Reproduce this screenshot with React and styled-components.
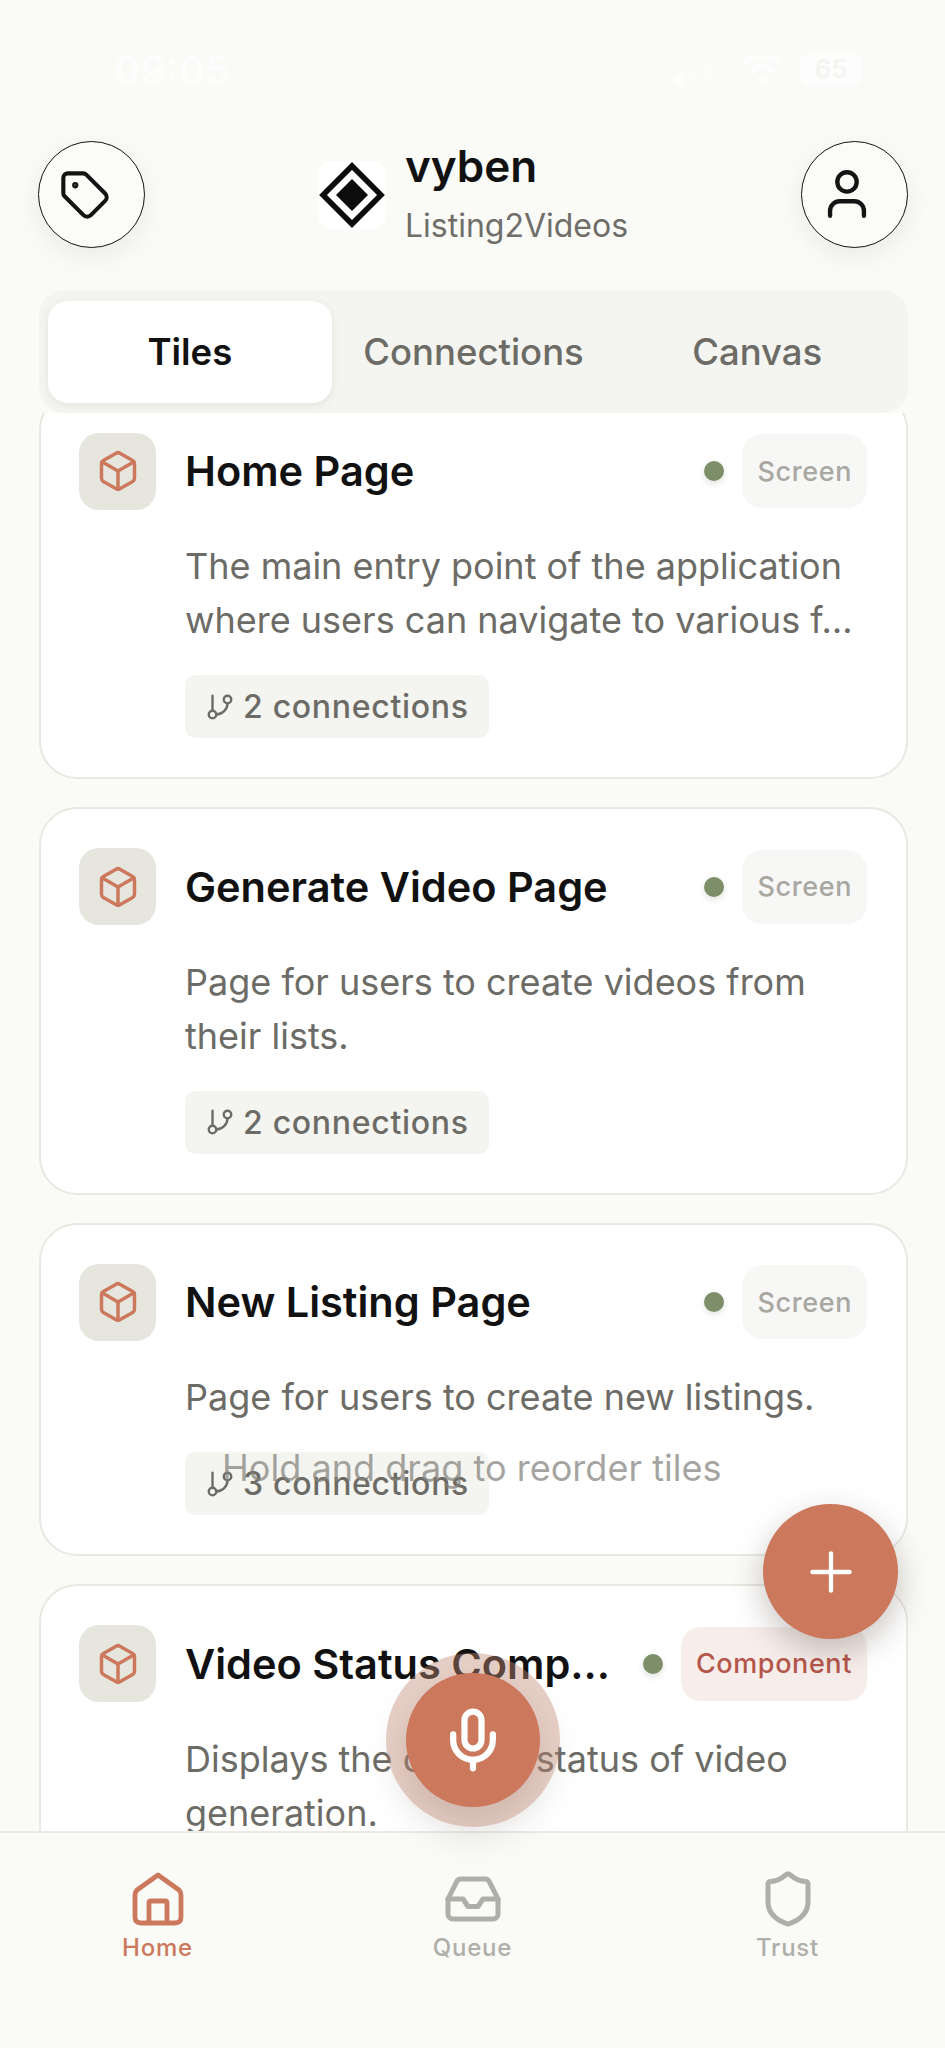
import React from 'react';
import styled, { createGlobalStyle } from 'styled-components';
import { Box, GitBranch, Inbox, Mic, Plus, Shield, Tag, User } from 'lucide-react';

const tiles = [
	{
		title: 'Home Page',
		text: 'The main entry point of the application where users can navigate to various f…',
		count: 2,
		kind: 'Screen',
	},
	{
		title: 'Generate Video Page',
		text: 'Page for users to create videos from their lists.',
		count: 2,
		kind: 'Screen',
	},
	{
		title: 'New Listing Page',
		text: 'Page for users to create new listings.',
		count: 3,
		kind: 'Screen',
	},
	{
		title: 'Video Status Comp...',
		text: 'Displays the current status of video generation.',
		kind: 'Component',
	},
];

const App = () => {
	return (
		<Page>
			<GlobalStyle />

			<StatusBar>
				<Time>09:05</Time>
				<StatusIcons>
					<Signal>
						<SignalBar $h={10} $on />
						<SignalBar $h={15} />
						<SignalBar $h={20} />
						<SignalBar $h={26} />
					</Signal>
					<svg width="41" height="30" viewBox="0 0 36 26" fill="#fff">
						<path d="M18 26l-5.500-6.500a8 8 0 0 1 11 0zM9.500 16l-3.500-4a18 18 0 0 1 24 0l-3.500 4a13 13 0 0 0-17 0zM3.500 9L0 5a27 27 0 0 1 36 0l-3.500 4a22 22 0 0 0-29 0z" />
					</svg>
					<Battery>65</Battery>
				</StatusIcons>
			</StatusBar>

			<Header>
				<RoundButton>
					<IconNudge>
						<Tag size={52} strokeWidth={1.9} />
					</IconNudge>
				</RoundButton>
				<Brand>
					<LogoBox>
						<svg width="68" height="68" viewBox="0 0 68 68">
							<path d="M34 5L63 34 34 63 5 34z" fill="none" stroke="#0c0c0c" strokeWidth="5.500" />
							<path d="M34 18L50 34 34 50 18 34z" fill="#0c0c0c" />
						</svg>
					</LogoBox>
					<BrandText>
						<BrandName>vyben</BrandName>
						<BrandSub>Listing2Videos</BrandSub>
					</BrandText>
				</Brand>
				<RoundButton>
					<IconNudge>
						<User size={58} strokeWidth={1.8} />
					</IconNudge>
				</RoundButton>
			</Header>

			<Tabs>
				<TabItem $active>Tiles</TabItem>
				<TabItem>Connections</TabItem>
				<TabItem>Canvas</TabItem>
			</Tabs>

			<ListArea>
				<TileList>
					{tiles.map((tile) => (
						<Tile key={tile.title}>
							<TileHead>
								<IconBox>
									<Box size={44} strokeWidth={1.9} />
								</IconBox>
								<TileTitle>{tile.title}</TileTitle>
								<Dot />
								<KindBadge $kind={tile.kind}>{tile.kind}</KindBadge>
							</TileHead>
							<TileText>{tile.text}</TileText>
							{tile.count && (
								<Chip>
									<GitBranch size={30} strokeWidth={1.9} />
									{tile.count} connections
								</Chip>
							)}
						</Tile>
					))}
				</TileList>
				<Hint>Hold and drag to reorder tiles</Hint>
				<AddButton>
					<Plus size={64} strokeWidth={1.6} />
				</AddButton>
				<MicButton>
					<Mic size={68} strokeWidth={2.2} />
				</MicButton>
			</ListArea>

			<BottomNav>
				<NavItem $active>
					<svg width="60" height="60" viewBox="0 0 60 60" fill="none" stroke="currentColor" strokeWidth="4.800" strokeLinejoin="round">
						<path d="M30 6L51 21Q53 23 53 26V48Q53 54 47 54H13Q7 54 7 48V26Q7 23 9 21Z" />
						<path d="M21 54V34Q21 32 23 32H37Q39 32 39 34V54" />
					</svg>
					Home
				</NavItem>
				<NavItem>
					<Inbox size={60} strokeWidth={2} />
					Queue
				</NavItem>
				<NavItem>
					<Shield size={60} strokeWidth={2} />
					Trust
				</NavItem>
			</BottomNav>
		</Page>
	);
};

const GlobalStyle = createGlobalStyle`
	* {
		box-sizing: border-box;
	}

	body {
		margin: 0;
		background: #fafaf7;
		font-family: 'Inter', 'Liberation Sans', sans-serif;
	}
`;

const Page = styled.div`
	width: 945px;
	height: 2048px;
	display: flex;
	flex-direction: column;
	background: #fafaf7;
	overflow: hidden;
`;

const StatusBar = styled.div`
	height: 141px;
	flex-shrink: 0;
	display: flex;
	justify-content: space-between;
	align-items: flex-start;
	padding: 47px 83px 0 114px;
	opacity: 0.75;
`;

const Time = styled.span`
	color: #fff;
	font-size: 40px;
	line-height: 46px;
	font-weight: 600;
`;

const StatusIcons = styled.div`
	display: flex;
	align-items: flex-end;
	gap: 17px;
	height: 38px;
`;

const Signal = styled.div`
	display: flex;
	align-items: flex-end;
	gap: 7px;
`;

const SignalBar = styled.i`
	width: 7px;
	height: ${(p) => p.$h}px;
	border-radius: 1px;
	background: ${(p) => (p.$on ? '#fff' : 'rgba(255, 255, 255, 0.35)')};
`;

const Battery = styled.span`
	width: 62px;
	height: 32px;
	border-radius: 9px;
	background: #fff;
	color: #f2f2ee;
	font-size: 26px;
	line-height: 32px;
	font-weight: 600;
	text-align: center;
`;

const Header = styled.header`
	height: 107px;
	flex-shrink: 0;
	padding: 0 37px 0 38px;
	display: flex;
	justify-content: space-between;
	align-items: center;
`;

const RoundButton = styled.button`
	width: 107px;
	height: 107px;
	padding: 0;
	display: flex;
	align-items: center;
	justify-content: center;
	border: 1.500px solid #141414;
	border-radius: 50%;
	background: #fbfbf8;
	color: #141414;
	box-shadow: 0 8px 26px rgba(40, 35, 25, 0.07);
`;

const IconNudge = styled.span`
	display: flex;
	margin-right: 14px;

	button:last-child & {
		margin-right: 16px;
		margin-top: -1px;
	}
`;

const Brand = styled.div`
	display: flex;
	align-items: center;
	gap: 19px;
`;

const LogoBox = styled.div`
	width: 68px;
	height: 68px;
	display: flex;
	align-items: center;
	justify-content: center;
	border-radius: 14px;
	background: #fff;
`;

const BrandText = styled.div`
	display: flex;
	flex-direction: column;
	gap: 16px;
	margin-top: -4px;
`;

const BrandName = styled.span`
	color: #111;
	font-size: 44px;
	line-height: 50px;
	font-weight: 600;
`;

const BrandSub = styled.span`
	color: #6f6e69;
	font-size: 32px;
	line-height: 38px;
`;

const Tabs = styled.nav`
	height: 123px;
	flex-shrink: 0;
	margin: 42px 37px 0 39px;
	padding: 11px 9px 10px;
	display: grid;
	grid-template-columns: repeat(3, 1fr);
	border-radius: 26px;
	background: #f4f4f0;
	position: relative;
	z-index: 2;
`;

const TabItem = styled.div`
	display: flex;
	align-items: center;
	justify-content: center;
	border-radius: 20px;
	font-size: 36.500px;
	font-weight: ${(p) => (p.$active ? 600 : 500)};
	color: ${(p) => (p.$active ? '#111' : '#6c6b66')};
	background: ${(p) => (p.$active ? '#fff' : 'transparent')};
	box-shadow: ${(p) => (p.$active ? '0 2px 8px rgba(40, 35, 25, 0.08)' : 'none')};
`;

const ListArea = styled.main`
	flex: 1;
	min-height: 0;
	position: relative;
`;

const TileList = styled.div`
	height: 100%;
	overflow: hidden;
	padding: 0 37px 0 39px;
	display: flex;
	flex-direction: column;
	gap: 28px;
`;

const Tile = styled.article`
	flex-shrink: 0;
	padding: 39px 39px 39px 38px;
	border: 2.500px solid #e9e8e2;
	border-radius: 38px;
	background: #fff;

	&:first-child {
		margin-top: -21.500px;
	}
`;

const TileHead = styled.div`
	display: flex;
	align-items: center;
	height: 77px;
`;

const IconBox = styled.div`
	width: 77px;
	height: 77px;
	flex-shrink: 0;
	margin-right: 29px;
	display: flex;
	align-items: center;
	justify-content: center;
	border-radius: 20px;
	background: #e6e6de;
	color: #cc785c;
`;

const TileTitle = styled.h3`
	flex: 1;
	min-width: 0;
	margin: 0;
	color: #111;
	font-size: 41.500px;
	line-height: 50px;
	font-weight: 600;
	white-space: nowrap;
`;

const Dot = styled.span`
	width: 20px;
	height: 20px;
	flex-shrink: 0;
	margin-right: 18px;
	border-radius: 50%;
	background: #7d8f69;
	box-shadow: 0 3px 6px rgba(60, 70, 50, 0.15);
`;

const KindBadge = styled.span`
	height: 74px;
	flex-shrink: 0;
	padding: 0 15px;
	display: flex;
	align-items: center;
	border-radius: 20px;
	font-size: 27px;
	font-weight: 500;
	letter-spacing: 0.6px;
	color: ${(p) => (p.$kind === 'Component' ? '#b5564a' : '#a8a7a2')};
	background: ${(p) => (p.$kind === 'Component' ? '#f7eeec' : '#f7f7f5')};
`;

const TileText = styled.p`
	margin: 29.500px 0 0 106px;
	color: #6c6b66;
	font-size: 36px;
	line-height: 54px;
`;

const Chip = styled.div`
	width: fit-content;
	height: 63px;
	margin: 28px 0 0 106px;
	padding: 0 20px;
	display: flex;
	align-items: center;
	gap: 8px;
	border-radius: 10px;
	background: #f4f4f0;
	color: #6c6b66;
	font-size: 32px;
	font-weight: 500;
	letter-spacing: 0.7px;
`;

const Hint = styled.div`
	position: absolute;
	left: 222px;
	top: 1033px;
	color: rgba(130, 129, 124, 0.72);
	font-size: 36.100px;
	line-height: 44px;
	white-space: nowrap;
`;

const AddButton = styled.button`
	position: absolute;
	left: 763px;
	top: 1091px;
	width: 135px;
	height: 135px;
	padding: 0;
	display: flex;
	align-items: center;
	justify-content: center;
	border: none;
	border-radius: 50%;
	background: #cc785c;
	color: #fff;
	box-shadow: 0 12px 32px rgba(60, 45, 35, 0.28);
`;

const MicButton = styled.button`
	position: absolute;
	left: 406px;
	top: 1260px;
	width: 134px;
	height: 134px;
	padding: 0;
	display: flex;
	align-items: center;
	justify-content: center;
	border: none;
	border-radius: 50%;
	background: #cc785c;
	color: #fff;
	box-shadow: 0 0 0 20px rgba(196, 140, 120, 0.42), 0 18px 40px rgba(60, 45, 35, 0.22);
`;

const BottomNav = styled.footer`
	height: 217px;
	flex-shrink: 0;
	padding: 36px 0 0;
	display: grid;
	grid-template-columns: repeat(3, 1fr);
	align-items: start;
	border-top: 2.500px solid #ebeae5;
	background: #fafaf7;
`;

const NavItem = styled.div`
	display: flex;
	flex-direction: column;
	align-items: center;
	gap: 4px;
	font-size: 24px;
	line-height: 30px;
	font-weight: 500;
	letter-spacing: 0.8px;
	color: ${(p) => (p.$active ? '#cc785c' : '#afaea8')};
`;

export default App;
